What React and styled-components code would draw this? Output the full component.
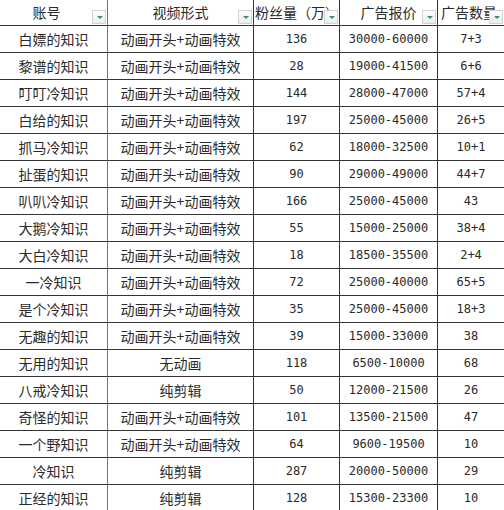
import React from "react";
import styled, { createGlobalStyle } from "styled-components";

const GlobalStyle = createGlobalStyle`
  html, body {
    margin: 0;
    padding: 0;
    background: #fff;
  }
`;

const LINE = "#333";
const CJK = `"Noto Sans CJK SC", "Noto Sans", sans-serif`;
const NUM = `"DejaVu Sans Mono", "Liberation Mono", monospace`;

const Sheet = styled.div`
  display: grid;
  grid-template-columns: 108px 146px 86px 98px 66px;
  width: 504px;
  color: #2a2a2a;
  font-family: ${CJK};
  font-size: 14px;
`;

const HeadCell = styled.div`
  position: relative;
  box-sizing: border-box;
  height: 26px;
  display: flex;
  align-items: flex-start;
  justify-content: ${(p) => (p.$left ? "flex-start" : "center")};
  padding: 0 ${(p) => p.$padRight || 0}px 0 ${(p) => p.$padLeft || 0}px;
  line-height: 24px;
  white-space: nowrap;
  overflow: hidden;
  border-bottom: 1px solid ${LINE};
  border-right: ${(p) => (p.$last ? "none" : `1px solid ${p.$soft ? "#777" : LINE}`)};
`;

const FilterButton = styled.span`
  position: absolute;
  right: 1px;
  bottom: 1px;
  width: 14px;
  height: 14px;
  box-sizing: border-box;
  border: 1px solid #d2d2d2;
  background: linear-gradient(#ffffff, #ededed);
  display: flex;
  align-items: center;
  justify-content: center;

  &::after {
    content: "";
    margin-left: 1px;
    border-left: 3px solid transparent;
    border-right: 3px solid transparent;
    border-top: 3px solid #3d8c6e;
  }
`;

const Cell = styled.div`
  box-sizing: border-box;
  height: 27px;
  display: flex;
  align-items: center;
  justify-content: center;
  white-space: nowrap;
  overflow: hidden;
  font-family: ${(p) => (p.$num ? NUM : CJK)};
  font-size: ${(p) => (p.$num ? "12px" : "14px")};
  padding-left: ${(p) => p.$shift || 0}px;
  border-bottom: 1px solid ${LINE};
  border-right: ${(p) => (p.$last ? "none" : `1px solid ${p.$soft ? "#777" : LINE}`)};
`;

const headers = [
  { label: "账号", padRight: 14, soft: true },
  { label: "视频形式" },
  { label: "粉丝量（万）", left: true, padLeft: 1 },
  { label: "广告报价" },
  { label: "广告数量", left: true, padLeft: 3, last: true },
];

const rows = [
  ["白嫖的知识", "动画开头+动画特效", "136", "30000-60000", "7+3"],
  ["黎谱的知识", "动画开头+动画特效", "28", "19000-41500", "6+6"],
  ["叮叮冷知识", "动画开头+动画特效", "144", "28000-47000", "57+4"],
  ["白给的知识", "动画开头+动画特效", "197", "25000-45000", "26+5"],
  ["抓马冷知识", "动画开头+动画特效", "62", "18000-32500", "10+1"],
  ["扯蛋的知识", "动画开头+动画特效", "90", "29000-49000", "44+7"],
  ["叭叭冷知识", "动画开头+动画特效", "166", "25000-45000", "43"],
  ["大鹅冷知识", "动画开头+动画特效", "55", "15000-25000", "38+4"],
  ["大白冷知识", "动画开头+动画特效", "18", "18500-35500", "2+4"],
  ["一冷知识", "动画开头+动画特效", "72", "25000-40000", "65+5"],
  ["是个冷知识", "动画开头+动画特效", "35", "25000-45000", "18+3"],
  ["无趣的知识", "动画开头+动画特效", "39", "15000-33000", "38"],
  ["无用的知识", "无动画", "118", "6500-10000", "68"],
  ["八戒冷知识", "纯剪辑", "50", "12000-21500", "26"],
  ["奇怪的知识", "动画开头+动画特效", "101", "13500-21500", "47"],
  ["一个野知识", "动画开头+动画特效", "64", "9600-19500", "10"],
  ["冷知识", "纯剪辑", "287", "20000-50000", "29"],
  ["正经的知识", "纯剪辑", "128", "15300-23300", "10"],
];

export default function App() {
  return (
    <>
      <GlobalStyle />
      <Sheet>
        {headers.map((h) => (
          <HeadCell
            key={h.label}
            $left={h.left}
            $padLeft={h.padLeft}
            $padRight={h.padRight}
            $last={h.last}
            $soft={h.soft}
          >
            {h.label}
            <FilterButton />
          </HeadCell>
        ))}
        {rows.map((r, i) => (
          <React.Fragment key={i}>
            <Cell $soft>{r[0]}</Cell>
            <Cell>{r[1]}</Cell>
            <Cell $num>{r[2]}</Cell>
            <Cell $num>{r[3]}</Cell>
            <Cell $num $last>{r[4]}</Cell>
          </React.Fragment>
        ))}
      </Sheet>
    </>
  );
}
